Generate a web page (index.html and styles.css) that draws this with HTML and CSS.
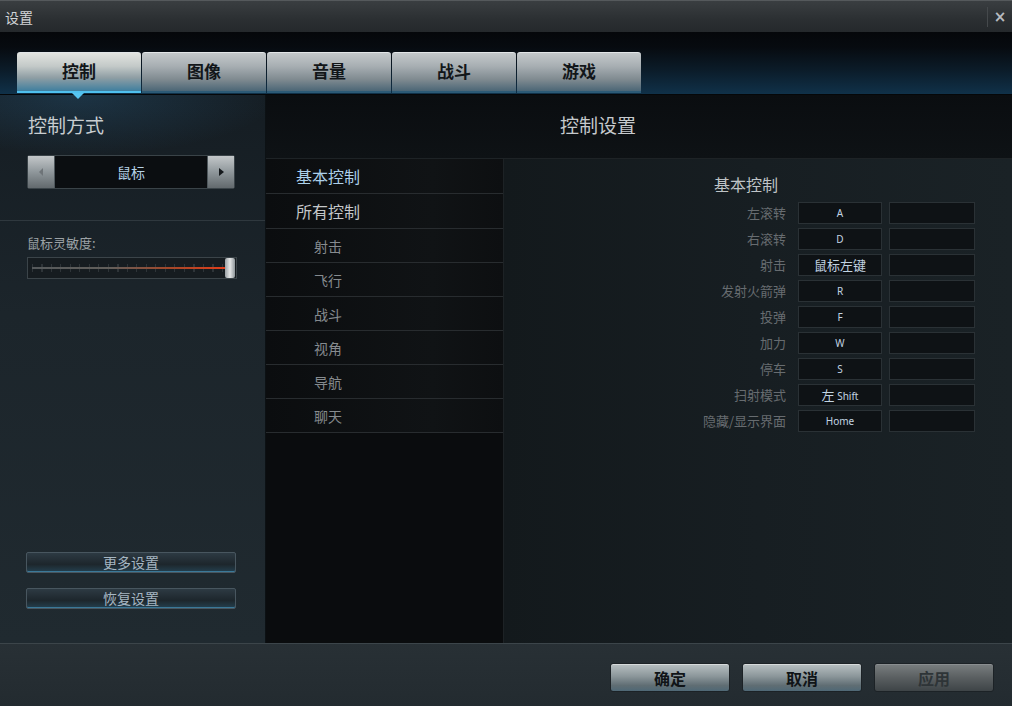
FILE: index.html
```html
<html>
  <head>
    <meta charset="utf-8">
    <link rel="stylesheet" href="styles.css">
  </head>
  <body>
    <div class="window">
      <div class="titlebar">
        <span class="title">设置</span>
        <span class="close">&#215;</span>
      </div>

      <div class="tabbar">
        <div class="tab active">控制</div>
        <div class="tab">图像</div>
        <div class="tab">音量</div>
        <div class="tab">战斗</div>
        <div class="tab">游戏</div>
      </div>

      <div class="main">
        <div class="left">
          <div class="left-top">
            <h2 class="left-head">控制方式</h2>
            <div class="selector">
              <div class="sel-btn sel-prev"><span class="arrow-l"></span></div>
              <div class="sel-value">鼠标</div>
              <div class="sel-btn sel-next"><span class="arrow-r"></span></div>
            </div>
          </div>
          <div class="left-mid">
            <div class="label">鼠标灵敏度:</div>
            <div class="slider">
              <div class="ticks"></div>
              <div class="track"></div>
              <div class="handle"></div>
            </div>
          </div>
          <div class="left-bottom">
            <div class="side-btn">更多设置</div>
            <div class="side-btn">恢复设置</div>
          </div>
        </div>

        <div class="content">
          <div class="content-head">控制设置</div>
          <div class="content-body">
            <ul class="cats">
              <li class="cat main-cat selected">基本控制</li>
              <li class="cat main-cat">所有控制</li>
              <li class="cat sub-cat">射击</li>
              <li class="cat sub-cat">飞行</li>
              <li class="cat sub-cat">战斗</li>
              <li class="cat sub-cat">视角</li>
              <li class="cat sub-cat">导航</li>
              <li class="cat sub-cat">聊天</li>
            </ul>
            <div class="bindings">
              <div class="bind-head">基本控制</div>
              <div class="bind-grid">
                <div class="bind-label">左滚转</div><div class="key">A</div><div class="key"></div>
                <div class="bind-label">右滚转</div><div class="key">D</div><div class="key"></div>
                <div class="bind-label">射击</div><div class="key cjk">鼠标左键</div><div class="key"></div>
                <div class="bind-label">发射火箭弹</div><div class="key">R</div><div class="key"></div>
                <div class="bind-label">投弹</div><div class="key">F</div><div class="key"></div>
                <div class="bind-label">加力</div><div class="key">W</div><div class="key"></div>
                <div class="bind-label">停车</div><div class="key">S</div><div class="key"></div>
                <div class="bind-label">扫射模式</div><div class="key"><span class="cjk-big">左</span> Shift</div><div class="key"></div>
                <div class="bind-label">隐藏/显示界面</div><div class="key">Home</div><div class="key"></div>
              </div>
            </div>
          </div>
        </div>
      </div>

      <div class="footer">
        <div class="foot-btn">确定</div>
        <div class="foot-btn">取消</div>
        <div class="foot-btn disabled">应用</div>
      </div>
    </div>
  </body>
</html>
```

FILE: styles.css
```css
body {
  margin: 0;
  background-color: #111519;
  font-family: "Noto Sans CJK SC", "Noto Sans", sans-serif;
}
.window {
  width: 1012px;
  height: 706px;
  display: flex;
  flex-direction: column;
  overflow: hidden;
}

/* title bar */
.titlebar {
  height: 32px;
  flex: none;
  box-sizing: border-box;
  border-top: 1px solid #55595c;
  background: linear-gradient(#3a3e41, #2b2f32 60%, #25292c);
  display: flex;
  align-items: center;
  justify-content: space-between;
  padding: 0 0 0 5px;
}
.title {
  color: #d2d4d6;
  font-size: 14px;
}
.close {
  color: #b8bcc0;
  font-family: "DejaVu Sans", sans-serif;
  font-weight: bold;
  font-size: 15px;
  width: 24px;
  text-align: center;
  border-left: 1px solid #45494c;
  line-height: 20px;
}

/* tabs */
.tabbar {
  height: 63px;
  flex: none;
  box-sizing: border-box;
  padding: 20px 0 0 17px;
  display: flex;
  gap: 1px;
  border-bottom: 1px solid #050709;
  background: linear-gradient(#05070a 0%, #070b10 25%, #0b1b28 60%, #103149 100%);
}
.tab {
  width: 124px;
  height: 41px;
  box-sizing: border-box;
  padding-bottom: 3px;
  border-radius: 3px 3px 0 0;
  border-top: 1px solid #e2e6e8;
  border-bottom: 2px solid #2c5a76;
  background: linear-gradient(#c4c9cb 0%, #a7aeb2 35%, #7f8a90 70%, #4b6676 100%);
  color: #121619;
  font-size: 17px;
  font-weight: bold;
  display: flex;
  align-items: center;
  justify-content: center;
  position: relative;
}
.tab.active {
  background: linear-gradient(#e2e4e0 0%, #c3c9c8 35%, #8f9ea4 65%, #3f7f9f 100%);
  border-bottom: 2px solid #4fc0ee;
}
.tab.active:after {
  content: "";
  position: absolute;
  left: 55px;
  bottom: -8px;
  border-left: 6px solid transparent;
  border-right: 6px solid transparent;
  border-top: 6px solid #56c4f0;
}

/* main area */
.main {
  flex: 1;
  display: flex;
  min-height: 0;
}
.left {
  width: 265px;
  flex: none;
  border-right: 1px solid #0c1114;
  display: flex;
  flex-direction: column;
  background:
    radial-gradient(ellipse 200px 60px at 78px 0, rgba(50, 120, 170, 0.25), transparent),
    linear-gradient(#151d23, #1c252b 40%, #202a30);
}
.left-top {
  height: 126px;
  box-sizing: border-box;
  border-bottom: 1px solid #2f383e;
  padding: 19px 0 0 27px;
}
.left-head {
  margin: 0 0 19px 1px;
  font-size: 19px;
  font-weight: normal;
  line-height: 22px;
  color: #c8cdd0;
}
.selector {
  width: 208px;
  height: 34px;
  display: flex;
  border: 1px solid #3a4348;
  border-radius: 2px;
  box-sizing: border-box;
  background: #0b0e11;
}
.sel-btn {
  width: 26px;
  display: flex;
  align-items: center;
  justify-content: center;
  background: linear-gradient(#c3c7c9, #8f979b 50%, #62696d);
}
.sel-value {
  flex: 1;
  color: #b6d2e6;
  font-size: 14px;
  display: flex;
  align-items: center;
  justify-content: center;
  border-left: 1px solid #4e575c;
  border-right: 1px solid #4e575c;
}
.arrow-l {
  border-top: 4px solid transparent;
  border-bottom: 4px solid transparent;
  border-right: 4px solid #6e7478;
}
.arrow-r {
  border-top: 4px solid transparent;
  border-bottom: 4px solid transparent;
  border-left: 5px solid #15191c;
}
.left-mid {
  padding: 13px 0 0 27px;
}
.label {
  font-size: 13px;
  color: #9ca2a6;
  line-height: 18px;
  margin-bottom: 5px;
}
.slider {
  width: 210px;
  height: 22px;
  box-sizing: border-box;
  border: 1px solid #3b4449;
  background: #161c20;
  position: relative;
}
.ticks {
  position: absolute;
  left: 4px;
  right: 12px;
  top: 6px;
  height: 8px;
  background: repeating-linear-gradient(90deg, #2e3438 0 1px, transparent 1px 9.5px);
}
.track {
  position: absolute;
  left: 4px;
  right: 10px;
  top: 9px;
  height: 2px;
  background: linear-gradient(90deg, #55595b 0%, #625f5b 40%, #a2482a 70%, #e23e1a 100%);
}
.handle {
  position: absolute;
  right: 1px;
  top: 0;
  width: 10px;
  height: 20px;
  border-radius: 2px;
  background: linear-gradient(90deg, #9aa0a4, #e4e6e6 50%, #8e969a);
}
.left-bottom {
  margin-top: auto;
  padding: 0 0 34px 26px;
  display: flex;
  flex-direction: column;
  gap: 15px;
}
.side-btn {
  width: 210px;
  height: 21px;
  box-sizing: border-box;
  border: 1px solid #48565f;
  border-radius: 2px;
  background: linear-gradient(#2d3a43, #1d262c 60%, #24404f);
  box-shadow: inset 0 -1px 0 #3a7898;
  color: #a6b6c2;
  font-size: 14px;
  line-height: 19px;
  text-align: center;
}

/* content */
.content {
  flex: 1;
  display: flex;
  flex-direction: column;
  min-width: 0;
}
.content-head {
  height: 64px;
  flex: none;
  box-sizing: border-box;
  padding: 18px 0 0 294px;
  font-size: 19px;
  line-height: 24px;
  color: #c6cacd;
  background: linear-gradient(#0a0d10, #0e1215);
  border-bottom: 1px solid #1e2326;
}
.content-body {
  flex: 1;
  display: flex;
}
.cats {
  width: 237px;
  flex: none;
  margin: 0;
  padding: 0;
  list-style: none;
  background: #0a0c0e;
  border-right: 1px solid #1d2225;
}
.cat {
  box-sizing: border-box;
  border-bottom: 1px solid #282c2f;
  background: linear-gradient(90deg, #0b0d0f, #101315 70%, #0d0f11);
  display: flex;
  align-items: center;
}
.main-cat {
  height: 35px;
  padding-left: 30px;
  font-size: 16px;
  color: #c4c7c9;
}
.main-cat.selected {
  color: #acd0ea;
}
.sub-cat {
  height: 34px;
  padding-left: 48px;
  font-size: 14px;
  color: #868b8f;
}
.bindings {
  flex: 1;
  background: linear-gradient(90deg, #13191c, #171e22 50%, #1a2226);
  padding: 15px 0 0 190px;
}
.bind-head {
  margin-left: 20px;
  font-size: 16px;
  line-height: 20px;
  color: #bfc4c7;
  margin-bottom: 8px;
}
.bind-grid {
  display: grid;
  grid-template-columns: 97px 84px 86px;
  grid-auto-rows: 22px;
  column-gap: 7px;
  row-gap: 4px;
}
.bind-label {
  text-align: right;
  font-size: 13px;
  line-height: 22px;
  color: #676c70;
  padding-right: 5px;
}
.key {
  box-sizing: border-box;
  border: 1px solid #2a3135;
  background: #0e1215;
  color: #c2d4e2;
  font-family: "Noto Sans", sans-serif;
  font-size: 10px;
  line-height: 20px;
  text-align: center;
}
.key.cjk {
  font-family: "Noto Sans CJK SC", sans-serif;
  font-size: 13px;
}
.cjk-big {
  font-family: "Noto Sans CJK SC", sans-serif;
  font-size: 13px;
}

/* footer */
.footer {
  height: 63px;
  flex: none;
  box-sizing: border-box;
  border-top: 1px solid #3c454a;
  background: linear-gradient(#283035, #232b30);
  display: flex;
  justify-content: flex-end;
  align-items: flex-start;
  gap: 12px;
  padding: 19px 18px 0 0;
}
.foot-btn {
  width: 120px;
  height: 29px;
  box-sizing: border-box;
  border: 1px solid #1c2226;
  border-radius: 3px;
  background: linear-gradient(#b8c0c2 0%, #8c979b 45%, #5f6d73 80%, #4f6876 100%);
  box-shadow: inset 0 1px 0 #d6dadb;
  color: #101417;
  font-size: 16px;
  font-weight: bold;
  display: flex;
  align-items: center;
  justify-content: center;
}
.foot-btn.disabled {
  background: linear-gradient(#7a7f80, #5a5f61 50%, #3e4447);
  box-shadow: inset 0 1px 0 #8a8e90;
  color: #2e3437;
}
```
